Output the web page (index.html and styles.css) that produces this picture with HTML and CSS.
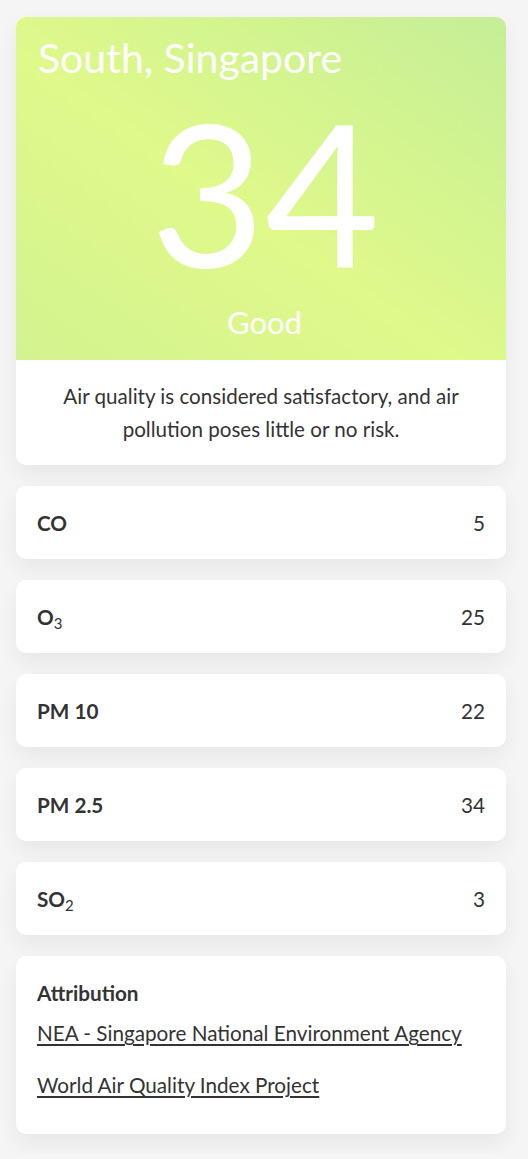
FILE: index.html
```html
<!DOCTYPE html>
<html lang="en">
<head>
<meta charset="utf-8">
<title>South, Singapore AQI</title>
<link rel="stylesheet" href="styles.css">
</head>
<body>
<main class="page">
  <section class="card summary">
    <div class="hero">
      <h1 class="location">South, Singapore</h1>
      <div class="aqi">34</div>
      <div class="level">Good</div>
    </div>
    <p class="desc">Air quality is considered satisfactory, and air pollution poses little or no risk.</p>
  </section>

  <div class="card row"><span class="label">CO</span><span class="value">5</span></div>
  <div class="card row"><span class="label">O<sub>3</sub></span><span class="value">25</span></div>
  <div class="card row"><span class="label">PM 10</span><span class="value">22</span></div>
  <div class="card row"><span class="label">PM 2.5</span><span class="value">34</span></div>
  <div class="card row"><span class="label">SO<sub>2</sub></span><span class="value">3</span></div>

  <section class="card attribution">
    <h2 class="attr-title">Attribution</h2>
    <a class="attr-link" href="#">NEA - Singapore National Environment Agency</a>
    <a class="attr-link" href="#">World Air Quality Index Project</a>
  </section>
</main>
</body>
</html>
```

FILE: styles.css
```css
html, body {
  margin: 0;
  padding: 0;
  background: #f5f5f5;
}
body {
  font-family: Lato, "Open Sans", sans-serif;
  color: #333;
}
.page {
  display: flex;
  flex-direction: column;
  gap: 21px;
  padding: 17px 22px 20px 16px;
}
.card {
  background: #fff;
  border-radius: 10px;
  box-shadow: 0 10px 22px rgba(0, 0, 0, 0.06);
  overflow: hidden;
}
.hero {
  height: 343px;
  box-sizing: border-box;
  padding: 18px 22px 0 22px;
  background: linear-gradient(to bottom left, #c5ee96 0%, #dff98a 55%, #d3f38f 100%);
  color: #fff;
  display: flex;
  flex-direction: column;
}
.location {
  margin: 0;
  font-weight: 400;
  font-size: 41px;
  line-height: 46px;
}
.aqi {
  margin-top: 10px;
  font-weight: 400;
  font-size: 198px;
  line-height: 200px;
  text-align: center;
  padding-left: 8px;
}
.level {
  margin-top: 14px;
  font-size: 31px;
  line-height: 34px;
  text-align: center;
  padding-left: 7px;
}
.desc {
  margin: 0;
  padding: 20px 40px 19px;
  text-align: center;
  font-size: 20.6px;
  line-height: 33px;
  color: #333;
}
.row {
  height: 73px;
  display: flex;
  align-items: center;
  justify-content: space-between;
  padding: 0 21px;
  font-size: 20.7px;
  color: #333;
}
.label {
  font-weight: 700;
}
.label sub {
  font-weight: 400;
  font-size: 15px;
  vertical-align: -4px;
  line-height: 0;
}
.attribution {
  display: flex;
  flex-direction: column;
  align-items: flex-start;
  padding: 24px 21px 36px;
}
.attr-title {
  margin: 0 0 14px;
  font-size: 20.7px;
  line-height: 26px;
  font-weight: 700;
}
.attr-link {
  color: #333;
  font-size: 20.7px;
  line-height: 26px;
  text-decoration: underline;
  text-underline-offset: 3px;
}
.attr-link + .attr-link {
  margin-top: 26px;
}
```
